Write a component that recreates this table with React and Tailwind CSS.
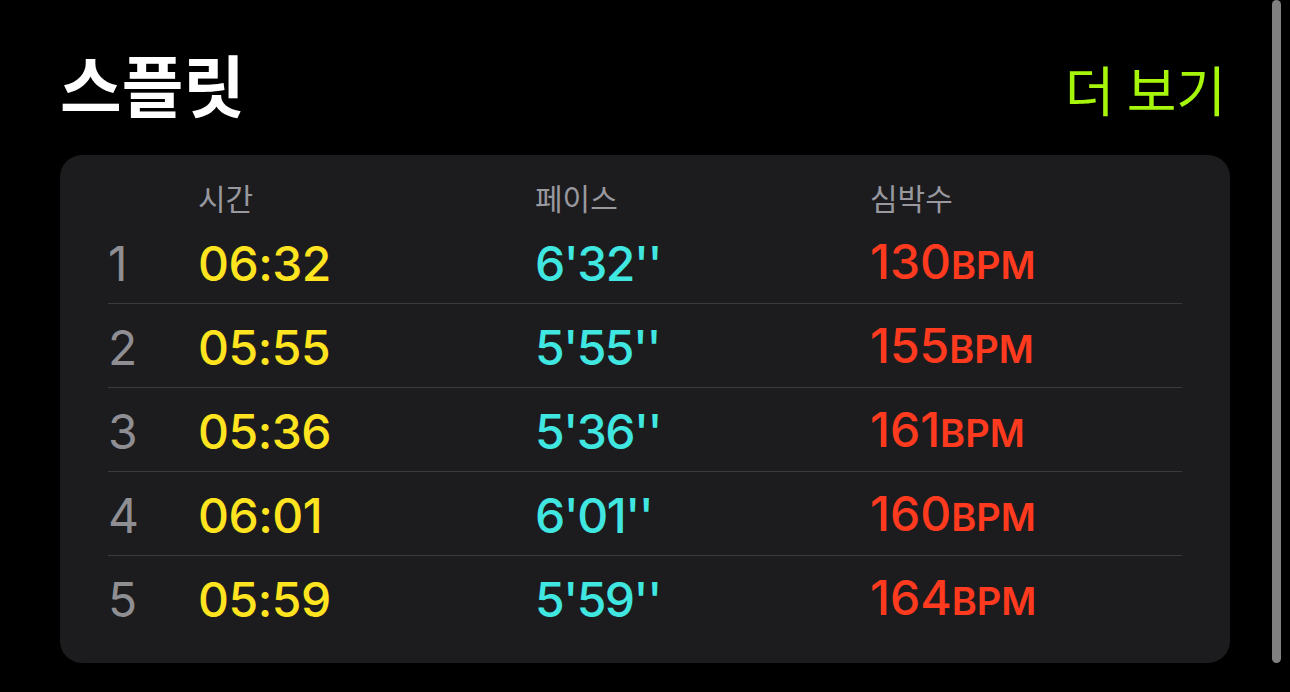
const splits = [
  { n: 1, time: '06:32', pace: "6'32''", bpm: 130 },
  { n: 2, time: '05:55', pace: "5'55''", bpm: 155 },
  { n: 3, time: '05:36', pace: "5'36''", bpm: 161 },
  { n: 4, time: '06:01', pace: "6'01''", bpm: 160 },
  { n: 5, time: '05:59', pace: "5'59''", bpm: 164 },
]

const kr = { fontFamily: '"Noto Sans CJK KR", "Noto Sans", sans-serif' }
const num = { fontFamily: 'Inter, "Noto Sans", sans-serif' }

const App = () => {
  return (
    <div className="relative w-[1290px] h-[692px] bg-black overflow-hidden">
      <div className="flex justify-between items-start px-[60px] h-[155px]">
        <div className="mt-[50px] text-[67px] leading-[66px] font-bold text-white" style={kr}>스플릿</div>
        <div className="mt-[62px] mr-[4px] text-[54px] leading-[54px] text-[#a6f60a]" style={kr}>더 보기</div>
      </div>

      <div className="mx-[60px] h-[508px] rounded-[22px] bg-[#1c1c1e] px-[48px]">
        <div className="grid grid-cols-[90px_337px_335px_1fr] h-[65px] pt-[23px] text-[30px] leading-[38px] text-[#98989f]" style={kr}>
          <div />
          <div>시간</div>
          <div>페이스</div>
          <div>심박수</div>
        </div>
        {splits.map((s, i) => (
          <div
            key={s.n}
            className={`grid grid-cols-[90px_337px_335px_1fr] h-[84px] items-center text-[48px] leading-[84px] ${i < splits.length - 1 ? 'border-b border-[#3a3a3c]' : ''}`}
            style={num}
          >
            <div className="text-[#8e8e93]">{s.n}</div>
            <div className="text-[#ffe41f] font-medium tracking-[-0.5px]">{s.time}</div>
            <div className="text-[#40e6e0] font-medium tracking-[-1.5px]">{s.pace}</div>
            <div className="text-[#ff3a1f] font-medium">
              {s.bpm}
              <span className="text-[38px] font-semibold">BPM</span>
            </div>
          </div>
        ))}
      </div>

      <div className="absolute right-[9px] top-0 w-[9px] h-[663px] rounded-full bg-[#808080]" />
    </div>
  )
}

export default App
